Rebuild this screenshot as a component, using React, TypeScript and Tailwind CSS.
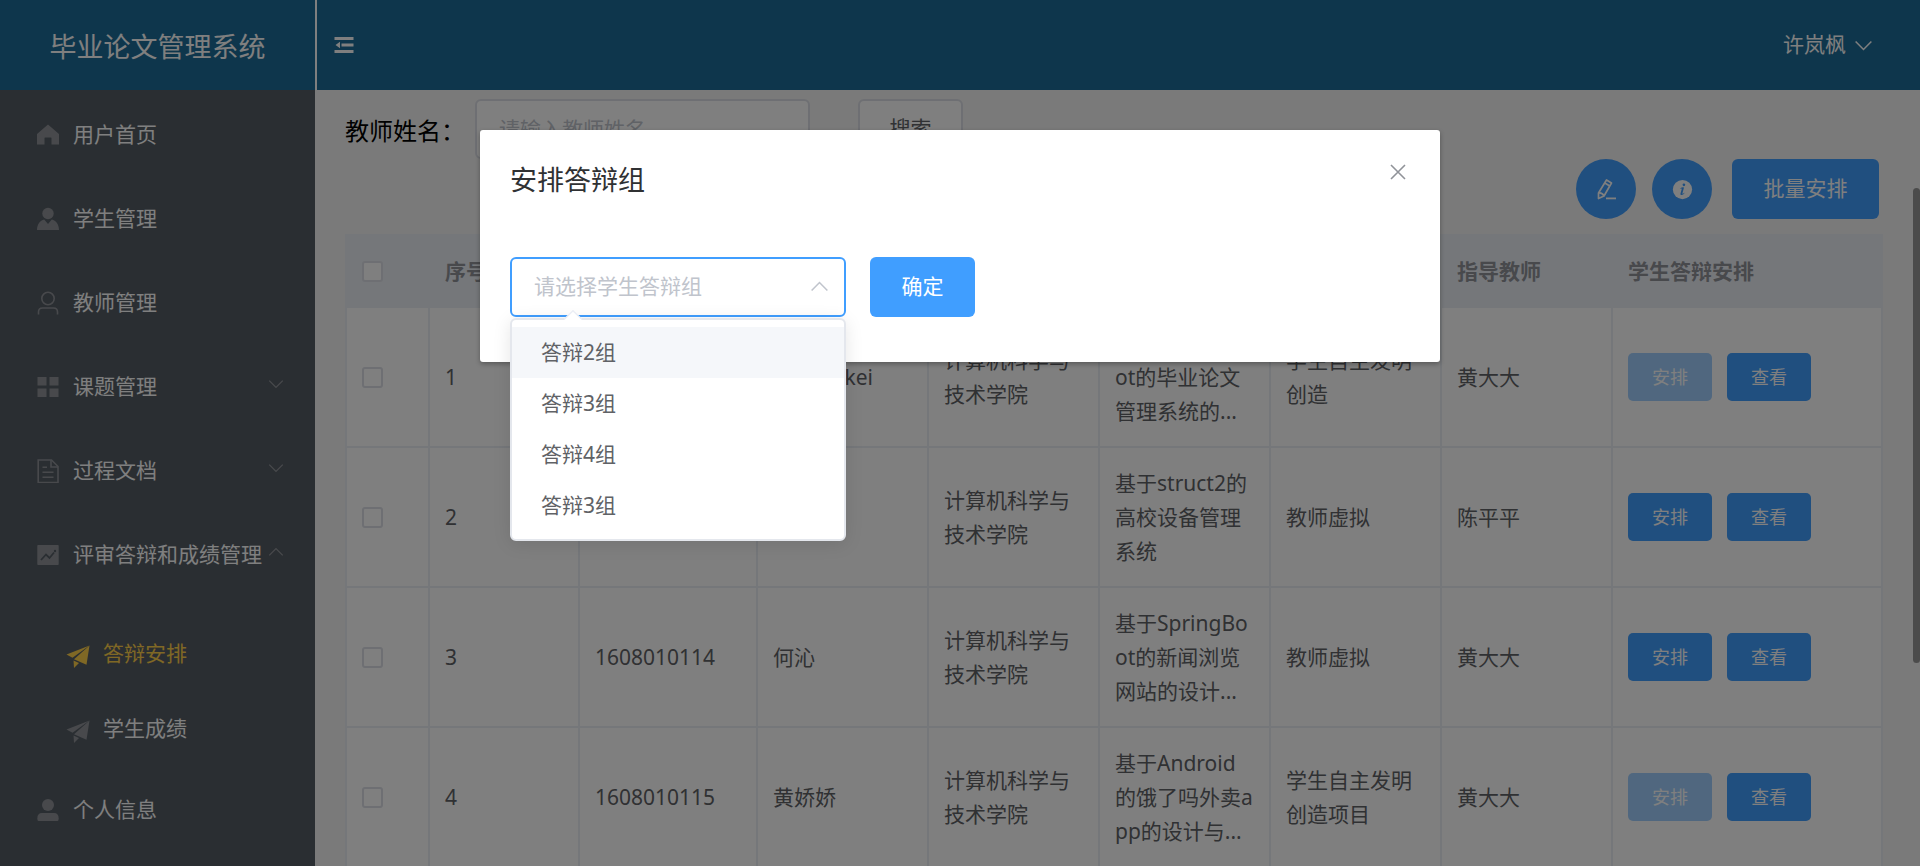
import React, { ReactNode } from "react";

const FONT = "font-['Noto_Sans','Noto_Sans_CJK_SC',sans-serif]";

function Svg({ size, className = "", children }: { size: number; className?: string; children: ReactNode }) {
  return (
    <svg width={size} height={size} viewBox="0 0 24 24" fill="currentColor" className={`shrink-0 ${className}`} aria-hidden="true">
      {children}
    </svg>
  );
}

function Home() {
  return (
    <Svg size={24}>
      <path d="M12 1.5 L23 11 V21.5 H15.5 V15 Q15.5 14.5 15 14.5 H9 Q8.500 14.5 8.500 15 V21.500 H1 V11 Z" />
    </Svg>
  );
}

function UserSolid() {
  return (
    <Svg size={24}>
      <circle cx="12" cy="6.500" r="5.700" />
      <path d="M8.200 12.500 L12 17 L15.800 12.500 C20 13.600 23 17.500 23 23 H1 C1 17.500 4 13.600 8.200 12.500 Z" />
    </Svg>
  );
}

function UserOutline() {
  return (
    <Svg size={24}>
      <g fill="none" stroke="currentColor" strokeWidth="1.6">
        <circle cx="12" cy="7.500" r="6.200" />
        <path d="M2.500 23.500 V21 Q2.500 17 6.500 17 H17.500 Q21.500 17 21.500 21 V23.500" />
      </g>
    </Svg>
  );
}

function Menu() {
  return (
    <Svg size={24}>
      <path d="M1.500 2 H10.500 V10.500 H1.500 Z M13.500 2 H22.500 V10.500 H13.500 Z M1.500 13.500 H10.500 V22 H1.500 Z M13.500 13.500 H22.500 V22 H13.500 Z" />
    </Svg>
  );
}

function Document() {
  return (
    <Svg size={24}>
      <g fill="none" stroke="currentColor" strokeWidth="1.6">
        <path d="M2.200 1 H15.500 L22 7.500 V23.500 H2.200 Z" />
        <path d="M15 1 V8 H22 M6.500 8.200 H11 M6.500 13.200 H17.500 M6.500 18.200 H17.500" />
      </g>
    </Svg>
  );
}

function Marketing() {
  return (
    <Svg size={24}>
      <rect x="1.300" y="2" width="21.400" height="20" rx="0.800" />
      <path d="M5 17 L10 11.500 L13.500 15 L18 9.500" fill="none" stroke="#545c64" strokeWidth="1.800" />
      <circle cx="19" cy="8" r="1.200" fill="#545c64" />
    </Svg>
  );
}

function Plane() {
  return (
    <Svg size={24}>
      <path d="M0.500 10.500 L23.500 1.500 L6.500 13.800 Z" />
      <path d="M23.500 1.500 L20.500 20.800 L8 15.200 Z" />
      <path d="M7.500 16.500 L13 19 L8 24 Z" />
    </Svg>
  );
}

function Person() {
  return (
    <Svg size={24}>
      <circle cx="12" cy="7" r="6" />
      <path d="M6 15 H18 Q22.700 15 22.700 20.500 Q22.700 23 21.500 23 H2.500 Q1.300 23 1.300 20.500 Q1.300 15 6 15 Z" />
    </Svg>
  );
}

function Chevron({ size, up = false }: { size: number; up?: boolean }) {
  return (
    <Svg size={size}>
      <path d={up ? "M3 16.500 L12 7.500 L21 16.500" : "M3 7.500 L12 16.500 L21 7.500"} fill="none" stroke="currentColor" strokeWidth="1.800" />
    </Svg>
  );
}

function Fold() {
  return (
    <Svg size={24}>
      <path d="M2.500 4 H21.500 V7 H2.500 Z M9.500 10.500 H21.500 V13.500 H9.500 Z M2.500 17 H21.500 V20 H2.500 Z M3.500 12 L8 8.800 V15.200 Z" />
    </Svg>
  );
}

function Edit() {
  return (
    <Svg size={24}>
      <g fill="none" stroke="currentColor" strokeWidth="1.700" strokeLinejoin="round">
        <path d="M12.500 3 L17.500 6 L10 19 L4.500 21.500 L4.500 16 Z" />
        <path d="M10.800 6 L15.800 9 M4.500 16 Q8.500 15.500 10 19" />
      </g>
      <path d="M12 20.500 H22 V22.300 H12 Z" />
    </Svg>
  );
}

function Info() {
  return (
    <Svg size={21}>
      <circle cx="12" cy="12" r="11" />
      <circle cx="13.600" cy="6.700" r="1.500" fill="#409eff" />
      <path d="M9.500 10.500 Q12 9 13.700 9.800 L11.800 16.800 Q12.800 17 14 15.600 L14.400 16 Q12.500 18.700 10.300 18.200 Q9.300 17.900 9.700 16.600 L11.200 11 Q10.500 10.800 9.500 11 Z" fill="#409eff" />
    </Svg>
  );
}

type Item = { label: string; icon: ReactNode; arrow?: "up" | "down"; children?: { label: string; active?: boolean }[] };

const menu: Item[] = [
  { label: "用户首页", icon: <Home /> },
  { label: "学生管理", icon: <UserSolid /> },
  { label: "教师管理", icon: <UserOutline /> },
  { label: "课题管理", icon: <Menu />, arrow: "down" },
  { label: "过程文档", icon: <Document />, arrow: "down" },
  {
    label: "评审答辩和成绩管理",
    icon: <Marketing />,
    arrow: "up",
    children: [{ label: "答辩安排", active: true }, { label: "学生成绩" }],
  },
  { label: "个人信息", icon: <Person /> },
];

function Sidebar() {
  return (
    <nav className="w-[315px] shrink-0 overflow-hidden bg-[#545c64] pt-[3px] text-[21px] text-white">
      <ul>
        {menu.map((item) => (
          <li key={item.label}>
            <a href="#" className="flex h-[84px] items-center pr-[30px] pl-[30px]">
              <span className="mr-[7px] flex w-9 justify-center text-[#909399]">{item.icon}</span>
              <span className="grow whitespace-nowrap">{item.label}</span>
              {item.arrow && (
                <span className="pb-1.5 text-[#909399]">
                  <Chevron size={18} up={item.arrow === "up"} />
                </span>
              )}
            </a>
            {item.children && (
              <ul className="pt-[19px] pb-0.5">
                {item.children.map((sub) => (
                  <li key={sub.label}>
                    <a href="#" className={`flex h-[75px] items-center pl-[60px] ${sub.active ? "text-[#ffd04b]" : ""}`}>
                      <span className={`mr-[7px] flex w-9 justify-center pt-1 ${sub.active ? "" : "text-[#909399]"}`}>
                        <Plane />
                      </span>
                      {sub.label}
                    </a>
                  </li>
                ))}
              </ul>
            )}
          </li>
        ))}
      </ul>
    </nav>
  );
}

const headers = ["序号", "学号", "姓名", "学院", "课题名称", "课题来源", "指导教师", "学生答辩安排"];

const rows = [
  { no: 1, id: "1608010112", name: "lizhengkei", title: "基于SpringBoot的毕业论文管理系统的...", source: "学生自主发明创造", teacher: "黄大大", arranged: true },
  { no: 2, id: "1608010113", name: "李明", title: "基于struct2的高校设备管理系统", source: "教师虚拟", teacher: "陈平平", arranged: false },
  { no: 3, id: "1608010114", name: "何沁", title: "基于SpringBoot的新闻浏览网站的设计...", source: "教师虚拟", teacher: "黄大大", arranged: false },
  { no: 4, id: "1608010115", name: "黄娇娇", title: "基于Android的饿了吗外卖app的设计与...", source: "学生自主发明创造项目", teacher: "黄大大", arranged: true },
];

const cell = "border-r-2 border-b-2 border-[#ebeef5] px-[15px] align-middle break-all";
const box = "block size-[21px] appearance-none rounded-[3px] border-2 border-[#dcdfe6] bg-white";
const smallButton = "h-12 w-[84px] rounded-[5px] text-lg text-white";

function StudentTable() {
  return (
    <table className="mt-[15px] w-full table-fixed border-separate border-spacing-0 border-l-2 border-[#ebeef5] bg-white text-[21px] leading-[34px] text-[#606266]">
      <colgroup>
        <col className="w-[83px]" />
        <col className="w-[150px]" />
        <col className="w-[178px]" />
        <col className="w-[171px]" />
        <col className="w-[171px]" />
        <col className="w-[171px]" />
        <col className="w-[171px]" />
        <col className="w-[171px]" />
        <col />
      </colgroup>
      <thead>
        <tr className="h-[74px] bg-[#ebeef5] text-left text-[#909399]">
          <th className={`${cell} pt-0.5`}>
            <input type="checkbox" aria-label="全选" className={box} />
          </th>
          {headers.map((h) => (
            <th key={h} className={`${cell} pt-0.5 font-bold`}>
              {h}
            </th>
          ))}
        </tr>
      </thead>
      <tbody>
        {rows.map((r) => (
          <tr key={r.no} className="h-[140px]">
            <td className={cell}>
              <input type="checkbox" aria-label={r.name} className={box} />
            </td>
            <td className={cell}>{r.no}</td>
            <td className={cell}>{r.id}</td>
            <td className={cell}>{r.name}</td>
            <td className={cell}>计算机科学与技术学院</td>
            <td className={cell}>{r.title}</td>
            <td className={cell}>{r.source}</td>
            <td className={cell}>{r.teacher}</td>
            <td className={cell}>
              <div className="flex gap-[15px]">
                <button disabled={r.arranged} className={`${smallButton} ${r.arranged ? "bg-[#a0cfff]" : "bg-[#409eff]"}`}>
                  安排
                </button>
                <button className={`${smallButton} bg-[#409eff]`}>查看</button>
              </div>
            </td>
          </tr>
        ))}
      </tbody>
    </table>
  );
}

const groups = ["答辩2组", "答辩3组", "答辩4组", "答辩3组"];

function ArrangeDialog() {
  return (
    <div role="dialog" aria-labelledby="dialog-title" className="mx-auto mt-[130px] h-[232px] w-1/2 rounded-[3px] bg-white px-[30px] pt-[30px] shadow-[0_2px_5px_rgba(0,0,0,0.3)]">
      <div className="flex items-start justify-between">
        <h2 id="dialog-title" className="text-[27px] leading-[40px] text-[#303133]">
          安排答辩组
        </h2>
        <button aria-label="关闭" className="text-[#909399]">
          <Svg size={24}>
            <path d="M5 5 L19 19 M19 5 L5 19" fill="none" stroke="currentColor" strokeWidth="1.600" />
          </Svg>
        </button>
      </div>
      <div className="mt-[57px] flex items-center gap-6 text-[21px]">
        <div className="relative w-[336px]">
          <select aria-label="请选择学生答辩组" defaultValue="" className="block h-[60px] w-full appearance-none rounded-md border-2 border-[#409eff] bg-white pr-11 pl-[22px] text-[#c0c4cc] outline-none">
            <option value="">请选择学生答辩组</option>
            {groups.map((g, i) => (
              <option key={i} value={i}>
                {g}
              </option>
            ))}
          </select>
          <span className="pointer-events-none absolute top-[19px] right-4 text-[#c0c4cc]">
            <Chevron size={21} up />
          </span>
          <ul role="listbox" className="absolute top-full left-0 mt-px w-full rounded-md border-2 border-[#e4e7ed] bg-white pt-[7px] pb-2 leading-[51px] text-[#606266] shadow-[0_3px_18px_rgba(0,0,0,0.1)]">
            <svg width="18" height="12" viewBox="0 0 18 12" className="absolute -top-[10px] left-[52px]" aria-hidden="true">
              <path d="M0 10 L9 1 L18 10 V12 H0 Z" fill="#ffffff" />
              <path d="M0 9.500 L9 0.800 L18 9.500" fill="none" stroke="#ebeef5" strokeWidth="1.500" />
            </svg>
            {groups.map((g, i) => (
              <li key={i} role="option" aria-selected={false} className={`h-[51px] px-[29px] ${i === 0 ? "bg-[#f5f7fa]" : ""}`}>
                {g}
              </li>
            ))}
          </ul>
        </div>
        <button className="h-[60px] w-[105px] rounded-md bg-[#409eff] text-white">确定</button>
      </div>
    </div>
  );
}

export default function App() {
  return (
    <div className={`h-screen bg-white pb-px ${FONT}`}>
      <div className="relative flex h-full flex-col overflow-hidden">
        <header className="flex h-[90px] shrink-0 bg-[#1c6c98] text-white">
          <h1 className="flex w-[315px] items-center justify-center pt-1 text-[27px]">毕业论文管理系统</h1>
          <div className="flex grow items-center justify-between border-l-2 border-white pr-[46px] pl-[15px]">
            <button aria-label="折叠菜单">
              <Fold />
            </button>
            <button className="flex items-center gap-[7px] text-[21px]">
              许岚枫
              <Chevron size={21} />
            </button>
          </div>
        </header>
        <div className="flex min-h-0 grow">
          <Sidebar />
          <main className="flex min-w-0 grow overflow-hidden bg-[#f4f4f4]">
            <div className="min-w-0 grow px-[30px] pt-[9px]">
              <form className="flex items-center text-[21px]">
                <label htmlFor="teacher" className="w-[130px] pt-1 text-2xl text-black">
                  教师姓名：
                </label>
                <input id="teacher" placeholder="请输入教师姓名" className="h-[60px] w-[335px] rounded-md border-2 border-[#dcdfe6] bg-white px-[22px] placeholder:text-[#c0c4cc]" />
                <button type="button" className="ml-12 h-[60px] w-[105px] rounded-md border-2 border-[#dcdfe6] bg-white text-[#606266]">
                  搜索
                </button>
              </form>
              <div className="flex justify-end pr-1 text-[21px] text-white">
                <button aria-label="编辑" className="flex size-[60px] items-center justify-center rounded-full bg-[#409eff]">
                  <Edit />
                </button>
                <button aria-label="说明" className="ml-4 flex size-[60px] items-center justify-center rounded-full bg-[#409eff]">
                  <Info />
                </button>
                <button className="ml-5 h-[60px] w-[147px] rounded-md bg-[#409eff]">批量安排</button>
              </div>
              <StudentTable />
            </div>
            <div className="w-[7px] shrink-0 pt-[98px]">
              <div className="h-[475px] rounded-full bg-[#979797]" />
            </div>
          </main>
        </div>
        <div className="absolute inset-0 bg-black/50">
          <ArrangeDialog />
        </div>
      </div>
    </div>
  );
}
